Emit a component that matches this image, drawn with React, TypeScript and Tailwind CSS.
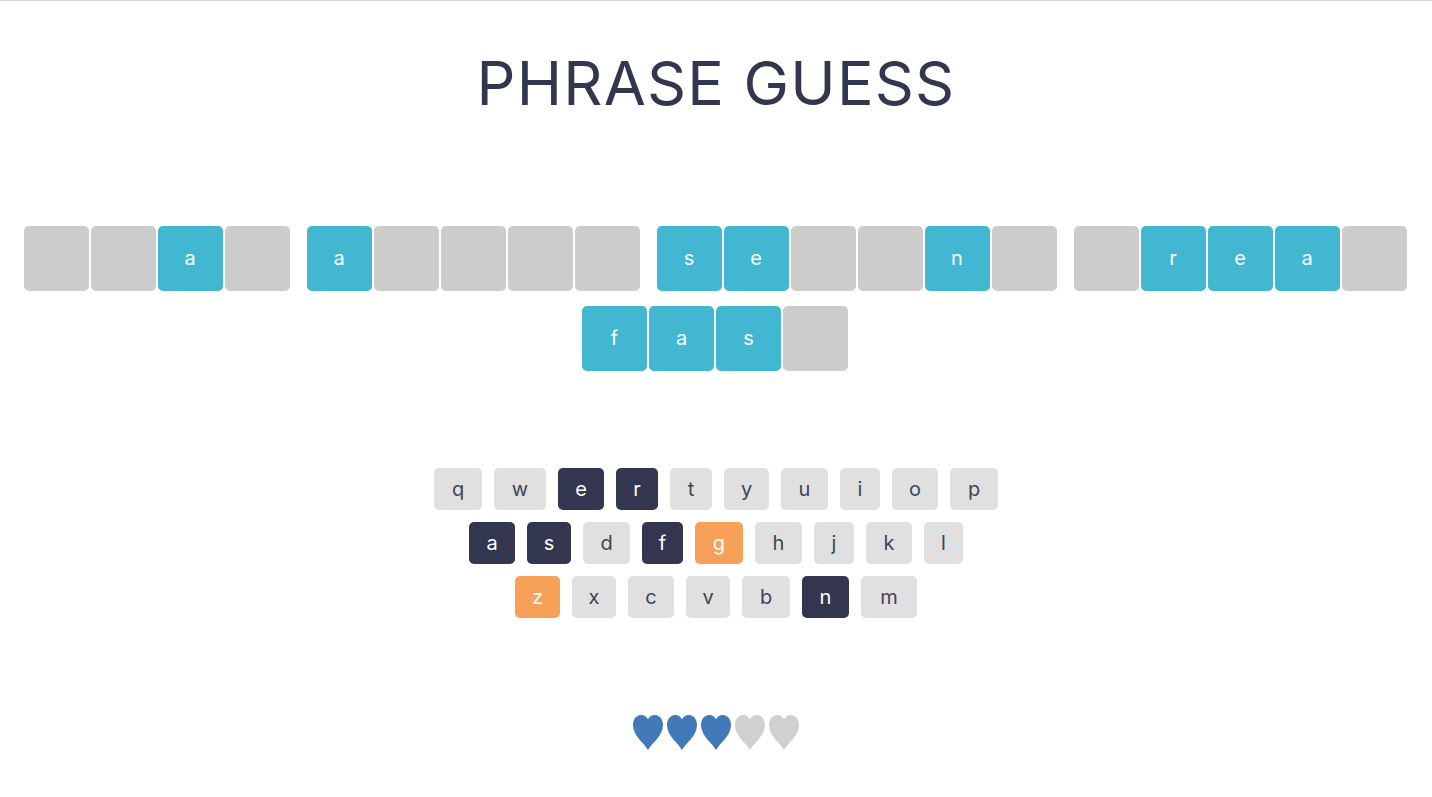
import React from 'react';

type KeyState = 'idle' | 'hit' | 'miss';

interface KeyDef {
  ch: string;
  w: string;
  state?: KeyState;
}

const words: string[][] = [
  ['', '', 'a', ''],
  ['a', '', '', '', ''],
  ['s', 'e', '', '', 'n', ''],
  ['', 'r', 'e', 'a', ''],
];

const lastWord = ['f', 'a', 's', ''];

const keyRows: KeyDef[][] = [
  [
    { ch: 'q', w: 'w-[48px]' },
    { ch: 'w', w: 'w-[52px]' },
    { ch: 'e', w: 'w-[46px]', state: 'hit' },
    { ch: 'r', w: 'w-[42px]', state: 'hit' },
    { ch: 't', w: 'w-[42px]' },
    { ch: 'y', w: 'w-[45px]' },
    { ch: 'u', w: 'w-[47px]' },
    { ch: 'i', w: 'w-[40px]' },
    { ch: 'o', w: 'w-[46px]' },
    { ch: 'p', w: 'w-[48px]' },
  ],
  [
    { ch: 'a', w: 'w-[46px]', state: 'hit' },
    { ch: 's', w: 'w-[44px]', state: 'hit' },
    { ch: 'd', w: 'w-[47px]' },
    { ch: 'f', w: 'w-[41px]', state: 'hit' },
    { ch: 'g', w: 'w-[48px]', state: 'miss' },
    { ch: 'h', w: 'w-[47px]' },
    { ch: 'j', w: 'w-[40px]' },
    { ch: 'k', w: 'w-[46px]' },
    { ch: 'l', w: 'w-[39px]' },
  ],
  [
    { ch: 'z', w: 'w-[45px]', state: 'miss' },
    { ch: 'x', w: 'w-[44px]' },
    { ch: 'c', w: 'w-[46px]' },
    { ch: 'v', w: 'w-[44px]' },
    { ch: 'b', w: 'w-[48px]' },
    { ch: 'n', w: 'w-[47px]', state: 'hit' },
    { ch: 'm', w: 'w-[56px]' },
  ],
];

const Tile: React.FC<{ ch: string }> = ({ ch }) => (
  <div
    className={`flex h-[65px] w-[65px] items-center justify-center rounded-[5px] pb-[2px] text-[20px] text-white ${
      ch ? 'bg-[#42b7d1]' : 'bg-[#cccccc]'
    }`}
  >
    {ch}
  </div>
);

const Word: React.FC<{ tiles: string[] }> = ({ tiles }) => (
  <div className="flex gap-[2px]">
    {tiles.map((ch, i) => (
      <Tile key={i} ch={ch} />
    ))}
  </div>
);

const keyColors: Record<KeyState, string> = {
  idle: 'bg-[#e0e0e0] text-[#3b4656]',
  hit: 'bg-[#32374f] text-white',
  miss: 'bg-[#f7a058] text-white',
};

const Key: React.FC<{ def: KeyDef }> = ({ def }) => (
  <div
    className={`flex h-[42px] items-center justify-center rounded-[5px] text-[20px] ${def.w} ${
      keyColors[def.state ?? 'idle']
    }`}
  >
    {def.ch}
  </div>
);

const Heart: React.FC<{ on: boolean }> = ({ on }) => (
  <svg viewBox="0 0 30 35" className="h-[35px] w-[30px]">
    <path
      d="M15 35C12 29 0 21 0 10 0 4.200 3.600 0 8.200 0 11 0 13.600 1.500 15 4.200 16.400 1.500 19 0 21.800 0 26.400 0 30 4.200 30 10 30 21 18 29 15 35Z"
      fill={on ? '#4279b8' : '#d0d0d0'}
    />
  </svg>
);

export default function App() {
  return (
    <div className="flex h-[797px] flex-col items-center overflow-hidden border-t border-[#d8d8dc] bg-white font-['Inter',sans-serif]">
      <h1 className="mt-[43px] text-[61px] leading-[78px] font-normal tracking-[1.2px] whitespace-nowrap text-[#32374f]">
        PHRASE GUESS
      </h1>

      <div className="mt-[104px] mr-[2px] flex flex-col items-center gap-[15px]">
        <div className="flex gap-[17px]">
          {words.map((tiles, i) => (
            <Word key={i} tiles={tiles} />
          ))}
        </div>
        <Word tiles={lastWord} />
      </div>

      <div className="mt-[97px] flex flex-col items-center gap-[12px]">
        {keyRows.map((row, i) => (
          <div key={i} className="flex gap-[12px]">
            {row.map((def) => (
              <Key key={def.ch} def={def} />
            ))}
          </div>
        ))}
      </div>

      <div className="mt-[97px] flex gap-[4px]">
        {[true, true, true, false, false].map((on, i) => (
          <Heart key={i} on={on} />
        ))}
      </div>
    </div>
  );
}
